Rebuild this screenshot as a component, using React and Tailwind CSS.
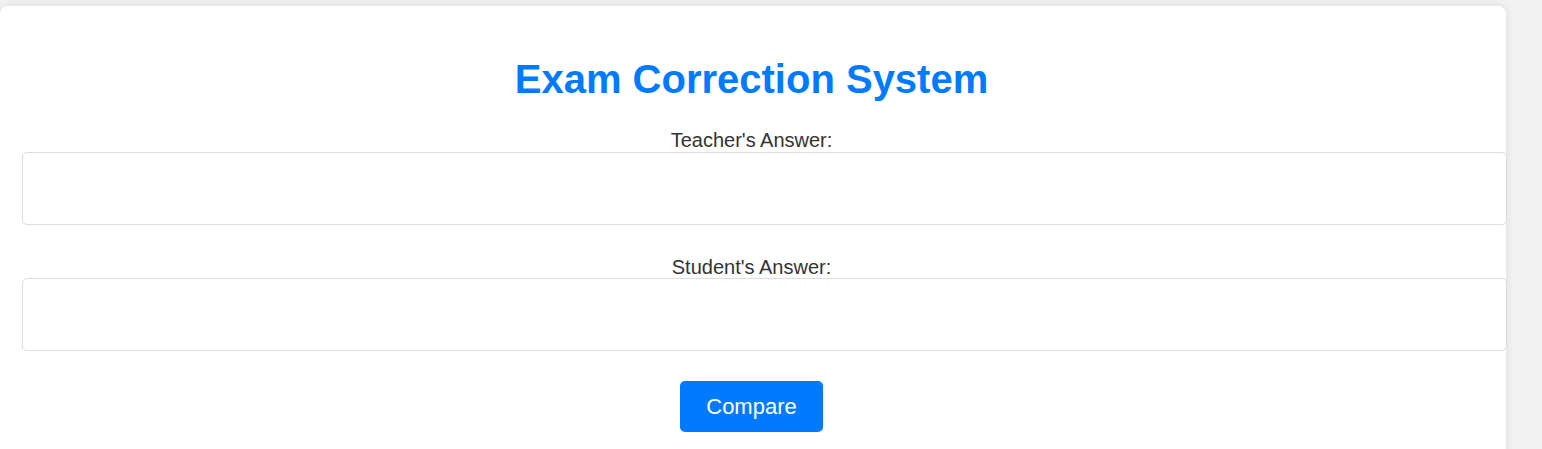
export default function App() {
    return (
        <div className="min-h-screen w-full overflow-hidden bg-[#f2f2f2] font-['Liberation_Sans',Arial,sans-serif]">
            <div className="mt-[6px] w-[1506px] h-[460px] rounded-lg bg-white shadow-[0_0_10px_rgba(0,0,0,0.1)] pl-[22px] pr-[25px] pt-[50px]">
                <h1 className="text-center text-[40px] leading-[46px] font-bold text-[#007bff]">
                    Exam Correction System
                </h1>
                <label className="mt-[27px] block text-center text-[20px] leading-[22px] text-[#333]">
                    Teacher's Answer:
                </label>
                <textarea className="mt-px block h-[73px] w-[1485px] resize-none rounded-[5px] border border-[#ddd] bg-white p-[10px]" />
                <label className="mt-[31px] block text-center text-[20px] leading-[22px] text-[#333]">
                    Student's Answer:
                </label>
                <textarea className="block h-[73px] w-[1485px] resize-none rounded-[5px] border border-[#ddd] bg-white p-[10px]" />
                <div className="mt-[30px] flex justify-center">
                    <button className="h-[51px] w-[143px] rounded-[5px] bg-[#007bff] text-[22px] text-white">
                        Compare
                    </button>
                </div>
            </div>
        </div>
    );
}
